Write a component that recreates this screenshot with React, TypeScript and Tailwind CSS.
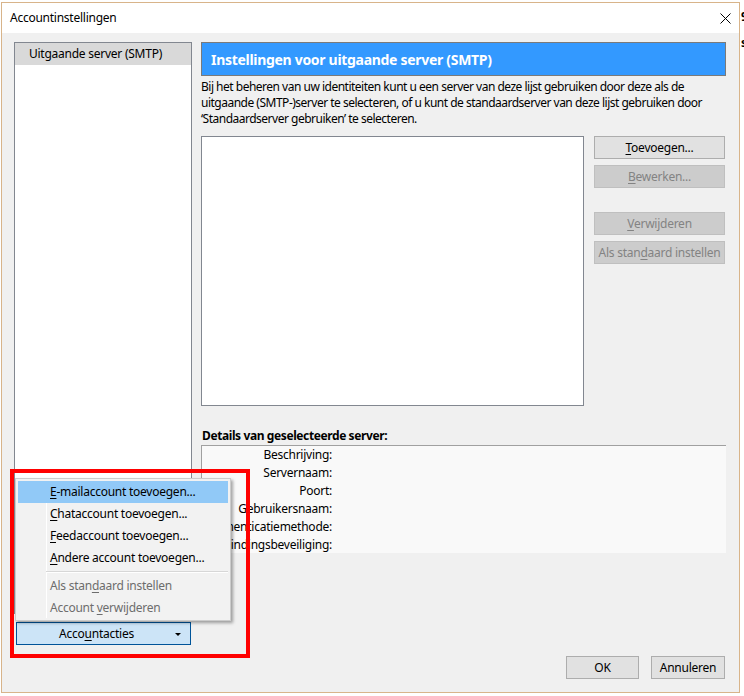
import React from "react";

const UI = "font-['Noto_Sans',sans-serif]";

function U({ children }: { children: React.ReactNode }) {
  return <span className="underline underline-offset-[2px] decoration-1">{children}</span>;
}

function Btn({
  children,
  disabled,
  className = "",
}: {
  children: React.ReactNode;
  disabled?: boolean;
  className?: string;
}) {
  return (
    <div
      className={
        "h-[23px] flex items-center justify-center border text-[12px] leading-none " +
        (disabled
          ? "bg-[#cccccc] border-[#bfbfbf] text-[#838383] "
          : "bg-[#e1e1e1] border-[#adadad] text-black ") +
        className
      }
    >
      <span>{children}</span>
    </div>
  );
}

const detailLabels = [
  "Beschrijving:",
  "Servernaam:",
  "Poort:",
  "Gebruikersnaam:",
  "Authenticatiemethode:",
  "Verbindingsbeveiliging:",
];

export default function App() {
  return (
    <div className={"relative w-[744px] h-[696px] bg-white overflow-hidden flex tracking-[-0.25px] " + UI}>
      {/* dialog window */}
      <div className="ml-[1px] mt-[2px] w-[739px] h-[691px] border border-[#d8b48a] flex flex-col bg-[#f0f0f0]">
        {/* title bar */}
        <div className="h-[30px] bg-white flex items-center justify-between pl-[8px] pr-[7px]">
          <span className="text-[12px] text-black">Accountinstellingen</span>
          <svg width="11" height="11" viewBox="0 0 11 11" className="mr-[1px]">
            <path d="M0.5 0.5 L10.5 10.5 M10.5 0.5 L0.5 10.5" stroke="#000" strokeWidth="1" />
          </svg>
        </div>

        {/* body */}
        <div className="flex-1 flex flex-col pl-[12px] pr-[13px] pt-[9px] pb-[13px]">
          <div className="h-[603px] flex gap-[9px]">
            {/* account tree */}
            <div className="w-[178px] flex flex-col gap-[8px]">
              <div className="flex-1 bg-white border border-[#828790]">
                <div className="h-[22px] bg-[#d9d9d9] flex items-center pl-[14px] text-[12px] text-black">
                  Uitgaande server (SMTP)
                </div>
              </div>
              <div className="mx-[2px] w-[175px] h-[23px] bg-[#cce4f7] border border-[#005499] flex items-center text-[12px] text-black relative">
                <span className="flex-1 text-center pr-[14px]">
                  Acco<U>u</U>ntacties
                </span>
                <span className="absolute left-[158px] top-[10px] w-0 h-0 border-l-[3px] border-r-[3px] border-t-[3px] border-l-transparent border-r-transparent border-t-black" />
              </div>
            </div>

            {/* SMTP settings pane */}
            <div className="flex-1 flex flex-col">
              <div className="h-[34px] bg-[#3399ff] border border-[#7a7a7a] flex items-center pl-[9px]">
                <span className="text-white font-bold text-[14px] tracking-[-0.3px]">
                  Instellingen voor uitgaande server (SMTP)
                </span>
              </div>
              <p className="mt-[3px] text-[12px] leading-[16px] text-black tracking-[-0.5px]">
                Bij het beheren van uw identiteiten kunt u een server van deze lijst gebruiken door deze als de
                uitgaande (SMTP-)server te selecteren, of u kunt de standaardserver van deze lijst gebruiken door
                ‘Standaardserver gebruiken’ te selecteren.
              </p>

              <div className="mt-[9px] h-[270px] flex gap-[10px]">
                <div className="flex-1 bg-white border border-[#828790]" />
                <div className="w-[131px] mr-[1px] flex flex-col">
                  <Btn>
                    <U>T</U>oevoegen...
                  </Btn>
                  <Btn disabled className="mt-[6px]">
                    <U>B</U>ewerken...
                  </Btn>
                  <Btn disabled className="mt-[24px]">
                    <U>V</U>erwijderen
                  </Btn>
                  <Btn disabled className="mt-[6px]">
                    Als stan<U>d</U>aard instellen
                  </Btn>
                </div>
              </div>

              <div className="mt-[22px] h-[16px] text-[12px] leading-[16px] font-bold text-black pl-[1px] tracking-[-0.4px]">
                Details van geselecteerde server:
              </div>
              <div className="mt-[1px] h-[108px] bg-[#f9f9f9] border-t border-l border-[#a0a0a0] flex flex-col">
                {detailLabels.map((l) => (
                  <div key={l} className="h-[18px] w-[130px] text-right text-[12px] leading-[18px] text-black">
                    {l}
                  </div>
                ))}
              </div>
            </div>
          </div>

          {/* dialog buttons */}
          <div className="mt-[11px] flex justify-end gap-[12px] pr-[1px]">
            <Btn className="w-[73px]">OK</Btn>
            <Btn className="w-[74px]">Annuleren</Btn>
          </div>
        </div>
      </div>

      {/* strip of the window behind */}
      <div className="flex-1 relative overflow-hidden text-[12px] font-bold text-black">
        <span className="absolute left-[1px] top-[8px]">9</span>
        <span className="absolute left-[1px] top-[34px]">s</span>
      </div>

      {/* account actions popup menu */}
      <div className="absolute left-[15px] top-[478px] w-[216px] h-[143px] bg-[#f2f2f2] border border-[#cccccc] shadow-[2px_2px_3px_rgba(0,0,0,0.35)] p-[2px] text-[12px]">
        <div className="absolute left-[30px] top-[2px] bottom-[2px] w-[1px] bg-white" />
        <div className="relative h-[22px] bg-[#91c9f7] flex items-center pl-[32px] text-black">
          <span>
            <U>E</U>-mailaccount toevoegen...
          </span>
        </div>
        <div className="relative h-[22px] flex items-center pl-[32px] text-black">
          <span>
            <U>C</U>hataccount toevoegen...
          </span>
        </div>
        <div className="relative h-[22px] flex items-center pl-[32px] text-black">
          <span>
            <U>F</U>eedaccount toevoegen...
          </span>
        </div>
        <div className="relative h-[22px] flex items-center pl-[32px] text-black">
          <span>
            <U>A</U>ndere account toevoegen...
          </span>
        </div>
        <div className="relative h-[6px] ml-[28px] flex flex-col justify-center">
          <div className="h-[1px] bg-[#d7d7d7]" />
          <div className="h-[1px] bg-white" />
        </div>
        <div className="relative h-[22px] flex items-center pl-[32px] text-[#6d6d6d]">
          <span>
            Als stan<U>d</U>aard instellen
          </span>
        </div>
        <div className="relative h-[22px] flex items-center pl-[32px] text-[#6d6d6d]">
          <span>
            Account <U>v</U>erwijderen
          </span>
        </div>
      </div>

      {/* red highlight frame */}
      <div className="absolute left-[10px] top-[469px] w-[240px] h-[189px] border-4 border-[#ff0000] pointer-events-none" />
    </div>
  );
}
